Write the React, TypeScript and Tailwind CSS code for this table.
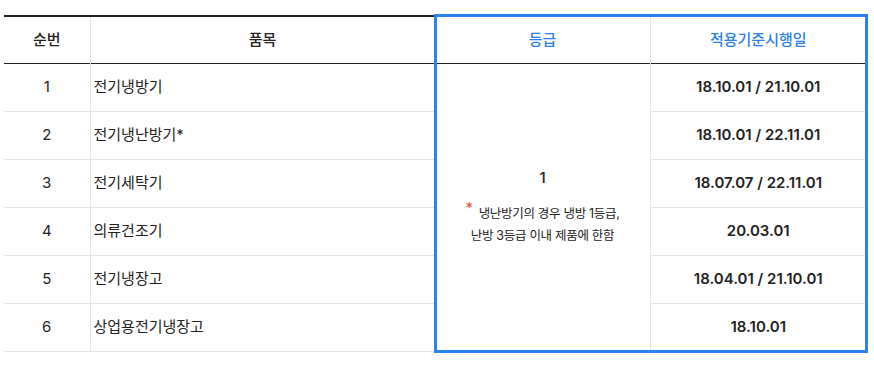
const rows = [
  { no: 1, name: '전기냉방기', date: '18.10.01 / 21.10.01' },
  { no: 2, name: '전기냉난방기*', date: '18.10.01 / 22.11.01' },
  { no: 3, name: '전기세탁기', date: '18.07.07 / 22.11.01' },
  { no: 4, name: '의류건조기', date: '20.03.01' },
  { no: 5, name: '전기냉장고', date: '18.04.01 / 21.10.01' },
  { no: 6, name: '상업용전기냉장고', date: '18.10.01' },
];

export default function App() {
  return (
    <div
      className="min-h-screen bg-white pl-[4px] pt-[15px]"
      style={{ fontFamily: "Inter, 'Noto Sans CJK KR', sans-serif" }}
    >
      <div className="relative w-[862px]">
        <table className="w-full table-fixed border-collapse text-[15px] text-[#222]">
          <colgroup>
            <col className="w-[86px]" />
            <col className="w-[345px]" />
            <col className="w-[215px]" />
            <col className="w-[216px]" />
          </colgroup>
          <thead>
            <tr className="h-[47px] border-t-2 border-b border-t-[#222] border-b-[#222]">
              <th className="border-r border-r-[#e5e5e5] font-medium">순번</th>
              <th className="border-r border-r-[#e5e5e5] font-medium">품목</th>
              <th className="border-r border-r-[#e5e5e5] font-medium text-[#2f7fe8]">등급</th>
              <th className="font-medium text-[#2f7fe8]">적용기준시행일</th>
            </tr>
          </thead>
          <tbody>
            {rows.map((r, i) => (
              <tr key={r.no} className="h-[48px] border-b border-b-[#e5e5e5]">
                <td className="border-r border-r-[#e5e5e5] text-center">{r.no}</td>
                <td className="border-r border-r-[#e5e5e5] pl-[3px]">{r.name}</td>
                {i === 0 && (
                  <td rowSpan={6} className="border-r border-r-[#e5e5e5] text-center align-middle">
                    <div className="text-[15px] font-medium">1</div>
                    <div className="mt-[12px] text-[12.5px] leading-[22px] tracking-[-0.3px]">
                      <span className="relative -top-[5px] mr-[6px] text-[15px] text-[#f04848]">*</span>
                      냉난방기의 경우 냉방 1등급,
                      <br />
                      난방 3등급 이내 제품에 한함
                    </div>
                  </td>
                )}
                <td className="text-center font-semibold">{r.date}</td>
              </tr>
            ))}
          </tbody>
        </table>
        <div className="pointer-events-none absolute left-[430px] top-[-1px] h-[339px] w-[434px] border-[3px] border-[#2a84f0]" />
      </div>
    </div>
  );
}
